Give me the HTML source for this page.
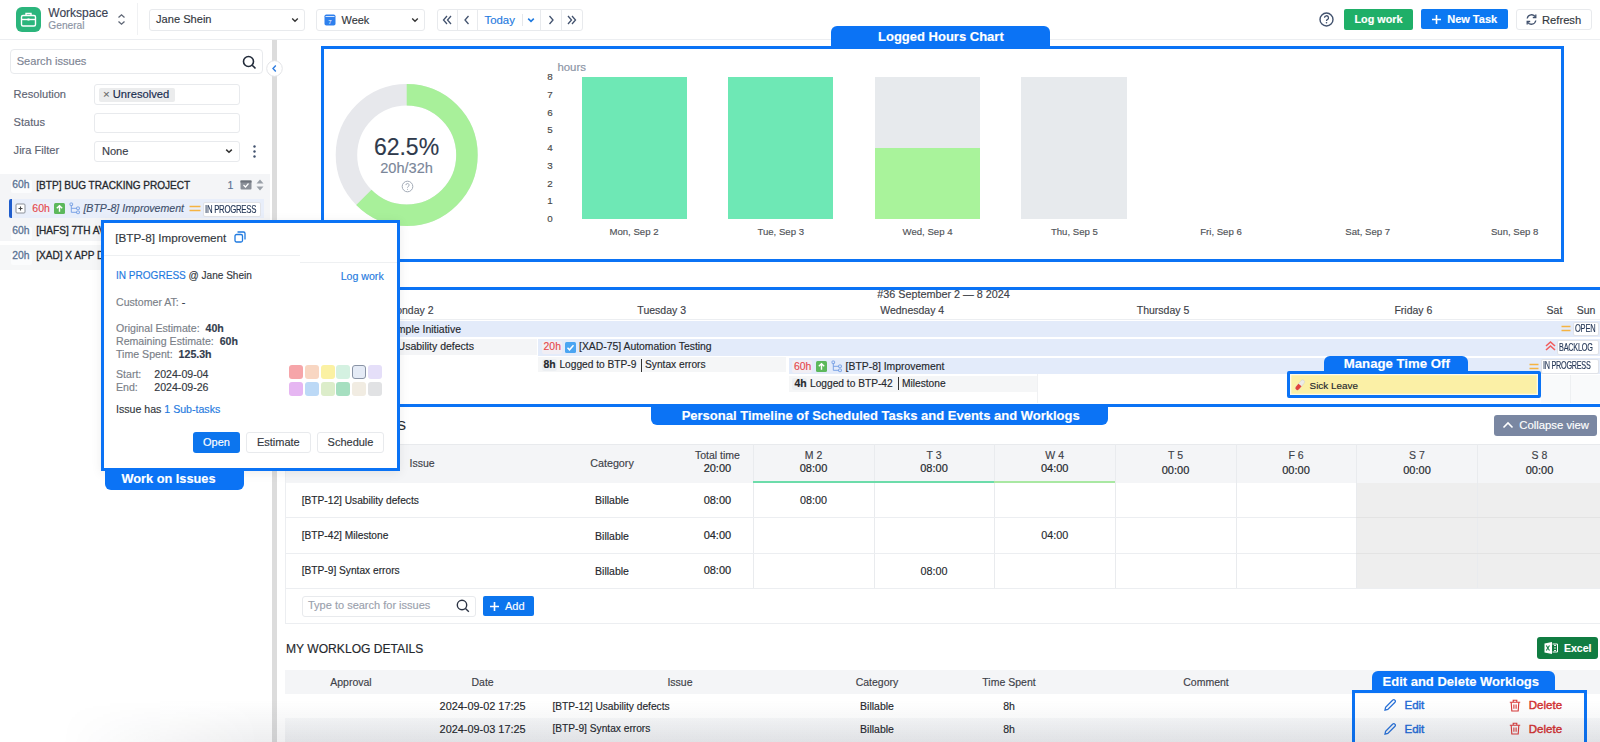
<!DOCTYPE html>
<html><head><meta charset="utf-8"><style>
html,body{margin:0;padding:0;width:1600px;height:742px;overflow:hidden;background:#fff;font-family:"Liberation Sans",sans-serif;}
.a{position:absolute;box-sizing:border-box;}
.t{white-space:nowrap;line-height:1;-webkit-text-stroke-width:0.15px;}
svg{display:block}
</style></head><body>
<div class="a " style="left:0px;top:39px;width:1600px;height:1px;background:#eceef1"></div>
<div class="a " style="left:137px;top:3px;width:1px;height:32px;background:#f0f1f3"></div>
<div class="a " style="left:16px;top:7px;width:25px;height:25px;background:#2bb57c;border-radius:6px"></div>
<svg class="a" style="left:16px;top:7px" width="25" height="25" viewBox="0 0 25 25"><g fill="none" stroke="#fff" stroke-width="1.4"><rect x="5.5" y="8.5" width="14" height="10.5" rx="1.5"/><path d="M10 8.5V6.5h5v2"/><path d="M5.5 12.5h14"/></g><rect x="11.5" y="11.5" width="2" height="2" fill="#fff"/></svg>
<div class="a t" style="left:48.30px;top:6.54px;font-size:12px;color:#3b4354;font-weight:400;">Workspace</div>
<div class="a t" style="left:48.30px;top:21.17px;font-size:10.2px;color:#8b93a3;font-weight:400;">General</div>
<svg class="a" style="left:116px;top:13px" width="11" height="13" viewBox="0 0 11 13"><path d="M2.5 4.5L5.5 1.8 8.5 4.5M2.5 8.5L5.5 11.2 8.5 8.5" fill="none" stroke="#5e6675" stroke-width="1.3"/></svg>
<div class="a " style="left:149px;top:9px;width:156px;height:21.5px;border:1px solid #e8eaed;border-radius:3px;background:#fff"></div>
<div class="a t" style="left:156.00px;top:14.10px;font-size:11.1px;color:#333840;font-weight:400;">Jane Shein</div>
<svg class="a" style="left:291px;top:16px" width="8" height="8" viewBox="0 0 8 8"><path d="M1.2 2.6L4 5.3 6.8 2.6" fill="none" stroke="#333" stroke-width="1.4"/></svg>
<div class="a " style="left:316px;top:9px;width:109px;height:21.5px;border:1px solid #e8eaed;border-radius:3px;background:#fff"></div>
<svg class="a" style="left:324px;top:14px" width="12" height="12" viewBox="0 0 12 12"><rect x="0.5" y="0.5" width="11" height="11" rx="1.8" fill="#2f80ed"/><rect x="1.5" y="2" width="9" height="0.9" fill="#e8f0ff"/><text x="6" y="10" font-size="6" fill="#fff" text-anchor="middle" font-family="Liberation Sans">7</text></svg>
<div class="a t" style="left:341.60px;top:14.77px;font-size:10.9px;color:#333840;font-weight:400;">Week</div>
<svg class="a" style="left:411px;top:16px" width="8" height="8" viewBox="0 0 8 8"><path d="M1.2 2.6L4 5.3 6.8 2.6" fill="none" stroke="#333" stroke-width="1.4"/></svg>
<div class="a " style="left:436.5px;top:9px;width:146px;height:21.5px;border:1px solid #e8eaed;border-radius:3px;background:#fff"></div>
<div class="a " style="left:457px;top:9.5px;width:1px;height:20.5px;background:#e8eaed"></div>
<div class="a " style="left:477px;top:9.5px;width:1px;height:20.5px;background:#e8eaed"></div>
<div class="a " style="left:540px;top:9.5px;width:1px;height:20.5px;background:#e8eaed"></div>
<div class="a " style="left:561px;top:9.5px;width:1px;height:20.5px;background:#e8eaed"></div>
<div class="a " style="left:522px;top:14px;width:1px;height:12px;background:#e6e8eb"></div>
<svg class="a" style="left:441px;top:14px" width="12" height="12" viewBox="0 0 12 12"><path d="M6 2L2.5 6 6 10M10 2L6.5 6 10 10" fill="none" stroke="#42526e" stroke-width="1.3"/></svg>
<svg class="a" style="left:461px;top:14px" width="12" height="12" viewBox="0 0 12 12"><path d="M7.5 2L4 6 7.5 10" fill="none" stroke="#42526e" stroke-width="1.3"/></svg>
<div class="a t" style="left:484.50px;top:15.15px;font-size:11.4px;color:#1f7ae0;font-weight:400;">Today</div>
<svg class="a" style="left:527px;top:16px" width="8" height="8" viewBox="0 0 8 8"><path d="M1.2 2.6L4 5.3 6.8 2.6" fill="none" stroke="#1f7ae0" stroke-width="1.6"/></svg>
<svg class="a" style="left:545px;top:14px" width="12" height="12" viewBox="0 0 12 12"><path d="M4.5 2L8 6 4.5 10" fill="none" stroke="#42526e" stroke-width="1.3"/></svg>
<svg class="a" style="left:566px;top:14px" width="12" height="12" viewBox="0 0 12 12"><path d="M2 2L5.5 6 2 10M6 2L9.5 6 6 10" fill="none" stroke="#42526e" stroke-width="1.3"/></svg>
<svg class="a" style="left:1319px;top:12px" width="15" height="15" viewBox="0 0 15 15"><circle cx="7.5" cy="7.5" r="6.5" fill="none" stroke="#42526e" stroke-width="1.4"/><path d="M5.5 5.8a2 2 0 1 1 2.8 1.8c-.6.3-.8.6-.8 1.3" fill="none" stroke="#42526e" stroke-width="1.3"/><circle cx="7.5" cy="10.8" r=".8" fill="#42526e"/></svg>
<div class="a " style="left:1344px;top:9px;width:69px;height:21px;background:#1faf68;border-radius:2px"></div>
<div class="a t" style="left:1078.50px;width:600px;text-align:center;top:14.36px;font-size:10.8px;color:#fff;font-weight:700;">Log work</div>
<div class="a " style="left:1421px;top:9px;width:87px;height:20px;background:#0c78f2;border-radius:2px"></div>
<svg class="a" style="left:1431px;top:14px" width="11" height="11" viewBox="0 0 11 11"><path d="M5.5 1v9M1 5.5h9" stroke="#fff" stroke-width="1.6"/></svg>
<div class="a t" style="left:1447.20px;top:14.19px;font-size:11px;color:#fff;font-weight:700;">New Task</div>
<div class="a " style="left:1516px;top:9px;width:76px;height:21px;border:1px solid #e8eaed;border-radius:3px;background:#fff"></div>
<svg class="a" style="left:1525px;top:13px" width="13" height="13" viewBox="0 0 13 13"><path d="M2.2 5.5A4.5 4.5 0 0 1 10.5 4M10.8 7.5A4.5 4.5 0 0 1 2.5 9" fill="none" stroke="#42526e" stroke-width="1.3"/><path d="M10.8 1.5v3h-3M2.2 11.5v-3h3" fill="none" stroke="#42526e" stroke-width="1.3"/></svg>
<div class="a t" style="left:1542.00px;top:14.52px;font-size:11.2px;color:#333840;font-weight:400;">Refresh</div>
<div class="a " style="left:271.5px;top:40px;width:5.5px;height:702px;background:#dcdcdc"></div>
<div class="a " style="left:9.5px;top:49px;width:253.5px;height:25px;border:1px solid #e8eaed;border-radius:4px;background:#fff"></div>
<div class="a t" style="left:16.70px;top:55.80px;font-size:11.1px;color:#7d8594;font-weight:400;">Search issues</div>
<svg class="a" style="left:242px;top:55px" width="15" height="15" viewBox="0 0 15 15"><circle cx="6.5" cy="6.5" r="5" fill="none" stroke="#222b3a" stroke-width="1.6"/><path d="M10.2 10.2L13.5 13.5" stroke="#222b3a" stroke-width="1.6"/></svg>
<svg class="a" style="left:266px;top:60px" width="17" height="17" viewBox="0 0 17 17"><circle cx="8.5" cy="8.5" r="7.8" fill="#fff" stroke="#e3e4e7" stroke-width="1"/><path d="M9.8 5.5L7 8.5 9.8 11.5" fill="none" stroke="#2f7de1" stroke-width="1.4"/></svg>
<div class="a t" style="left:13.60px;top:88.80px;font-size:11.1px;color:#5e6473;font-weight:400;">Resolution</div>
<div class="a " style="left:94.3px;top:84px;width:145.5px;height:20.5px;border:1px solid #e8eaed;border-radius:3px;background:#fff"></div>
<div class="a " style="left:99.3px;top:87.5px;width:76.2px;height:14px;background:#ebeced;border-radius:2px"></div>
<div class="a t" style="left:103.00px;top:89.27px;font-size:11.5px;color:#666;font-weight:400;">×</div>
<div class="a t" style="left:112.70px;top:89.22px;font-size:11.2px;color:#172b4d;font-weight:400;">Unresolved</div>
<div class="a t" style="left:13.60px;top:116.80px;font-size:11.1px;color:#5e6473;font-weight:400;">Status</div>
<div class="a " style="left:94.3px;top:112.5px;width:145.5px;height:20px;border:1px solid #e8eaed;border-radius:3px;background:#fff"></div>
<div class="a t" style="left:13.60px;top:145.10px;font-size:11.1px;color:#5e6473;font-weight:400;">Jira Filter</div>
<div class="a " style="left:94.3px;top:140.6px;width:145.5px;height:21.8px;border:1px solid #e8eaed;border-radius:3px;background:#fff"></div>
<div class="a t" style="left:101.90px;top:146.40px;font-size:11.1px;color:#3a404a;font-weight:400;">None</div>
<svg class="a" style="left:225px;top:147px" width="8" height="8" viewBox="0 0 8 8"><path d="M1.2 2.6L4 5.3 6.8 2.6" fill="none" stroke="#333" stroke-width="1.5"/></svg>
<svg class="a" style="left:252px;top:144px" width="5" height="15" viewBox="0 0 5 15"><circle cx="2.5" cy="2.5" r="1.2" fill="#42526e"/><circle cx="2.5" cy="7.5" r="1.2" fill="#42526e"/><circle cx="2.5" cy="12.5" r="1.2" fill="#42526e"/></svg>
<div class="a " style="left:0px;top:174px;width:270px;height:45.5px;background:#f4f5f7"></div>
<div class="a " style="left:11px;top:180px;width:21px;height:13px;background:#fbfcfd;border-radius:2px"></div>
<div class="a t" style="left:12.30px;top:180.48px;font-size:10.3px;color:#5a7394;font-weight:400;-webkit-text-stroke:0.3px #5a7394">60h</div>
<div class="a t" style="left:36.30px;top:180.69px;font-size:10.05px;color:#25282d;font-weight:400;-webkit-text-stroke:0.3px #25282d">[BTP] BUG TRACKING PROJECT</div>
<div class="a t" style="left:227.50px;top:180.31px;font-size:10.5px;color:#5a7394;font-weight:400;">1</div>
<svg class="a" style="left:240px;top:179px" width="12" height="11" viewBox="0 0 12 11"><rect x="0.5" y="1.5" width="11" height="9" rx="1" fill="#8a8f98"/><rect x="0.5" y="1.5" width="11" height="2" fill="#6d727b"/><path d="M3.5 6l2 2 3-3.5" fill="none" stroke="#fff" stroke-width="1.2"/></svg>
<svg class="a" style="left:256px;top:179px" width="8" height="12" viewBox="0 0 8 12"><path d="M4 0.5L7.5 4.5h-7zM4 11.5L0.5 7.5h7z" fill="#9aa0a8"/></svg>
<div class="a " style="left:9px;top:199px;width:255px;height:19px;background:#e8eefa"></div>
<div class="a " style="left:9px;top:199px;width:3px;height:19px;background:#1f5dcc;border-radius:2px 0 0 2px"></div>
<svg class="a" style="left:15px;top:203px" width="11" height="11" viewBox="0 0 11 11"><rect x="1" y="1" width="9" height="9" rx="1" fill="#fff" stroke="#8a8f98" stroke-width="1"/><path d="M5.5 3.5v4M3.5 5.5h4" stroke="#444" stroke-width="1.1"/></svg>
<div class="a " style="left:31px;top:202px;width:19px;height:13px;background:#edf0f8;border-radius:2px"></div>
<div class="a t" style="left:32.30px;top:203.11px;font-size:10.5px;color:#e5484d;font-weight:400;">60h</div>
<svg class="a" style="left:54px;top:203px" width="11" height="11" viewBox="0 0 11 11"><rect width="11" height="11" rx="1.5" fill="#5cb85c"/><path d="M5.5 8.8V2.8M2.8 5.3l2.7-2.6 2.7 2.6" fill="none" stroke="#fff" stroke-width="1.4"/></svg>
<svg class="a" style="left:69px;top:202px" width="12" height="13" viewBox="0 0 12 13"><g fill="none" stroke="#6f9be3" stroke-width="0.9"><rect x="1" y="1" width="2.6" height="2.6" rx=".6"/><rect x="7.6" y="5" width="2.8" height="2.6" rx=".6"/><rect x="7.6" y="9" width="2.8" height="2.6" rx=".6"/><path d="M2.3 3.6v6.7h5.3M2.3 6.3h5.3"/></g></svg>
<div class="a t" style="left:83.40px;top:203.03px;font-size:10.6px;color:#42526e;font-weight:400;font-style:italic">[BTP-8] Improvement</div>
<svg class="a" style="left:189px;top:204px" width="12" height="9" viewBox="0 0 12 9"><path d="M0.5 2.5h11M0.5 6.5h11" stroke="#f5b342" stroke-width="1.6"/></svg>
<div class="a " style="left:203px;top:202px;width:58px;height:14.5px;background:#fff;border:1px solid #e1e3e8;border-radius:2px"></div>
<div class="a t" style="left:204.50px;top:203.99px;font-size:11px;color:#253858;font-weight:400;transform:scaleX(0.71);transform-origin:0 0;letter-spacing:-0.4px">IN PROGRESS</div>
<div class="a " style="left:0px;top:219.5px;width:270px;height:21.5px;background:#f4f5f7"></div>
<div class="a " style="left:11px;top:227px;width:21px;height:13px;background:#fbfcfd;border-radius:2px"></div>
<div class="a t" style="left:12.30px;top:225.78px;font-size:10.3px;color:#5a7394;font-weight:400;-webkit-text-stroke:0.3px #5a7394">60h</div>
<div class="a t" style="left:36.30px;top:225.99px;font-size:10.05px;color:#25282d;font-weight:400;-webkit-text-stroke:0.3px #25282d">[HAFS] 7TH AVENUE PROJECT</div>
<div class="a " style="left:0px;top:245px;width:270px;height:25px;background:#f6f7f8"></div>
<div class="a " style="left:11px;top:252px;width:21px;height:13px;background:#fbfcfd;border-radius:2px"></div>
<div class="a t" style="left:12.30px;top:251.28px;font-size:10.3px;color:#5a7394;font-weight:400;-webkit-text-stroke:0.3px #5a7394">20h</div>
<div class="a t" style="left:36.30px;top:251.49px;font-size:10.05px;color:#25282d;font-weight:400;-webkit-text-stroke:0.3px #25282d">[XAD] X APP DEVELOPMENT</div>
<div class="a " style="left:321px;top:46px;width:1243px;height:216px;border:3px solid #0b73f5"></div>
<svg class="a" style="left:326px;top:74px" width="162" height="162" viewBox="0 0 162 162"><circle cx="80.7" cy="81" r="60.25" fill="none" stroke="#e7e8ec" stroke-width="21.5"/><circle cx="80.7" cy="81" r="60.25" fill="none" stroke="#a8f09a" stroke-width="21.5" stroke-dasharray="236.58 400" transform="rotate(-90 80.7 81)"/></svg>
<div class="a t" style="left:106.50px;width:600px;text-align:center;top:136.13px;font-size:23px;color:#2f3a4c;font-weight:400;">62.5%</div>
<div class="a t" style="left:106.60px;width:600px;text-align:center;top:160.94px;font-size:14.6px;color:#7a8699;font-weight:400;">20h/32h</div>
<svg class="a" style="left:401px;top:180px" width="13" height="13" viewBox="0 0 13 13"><circle cx="6.5" cy="6.5" r="5.3" fill="none" stroke="#a3abb7" stroke-width="1"/><path d="M4.9 5.1a1.6 1.6 0 1 1 2.2 1.5c-.5.2-.6.5-.6 1" fill="none" stroke="#a3abb7" stroke-width="1"/><circle cx="6.5" cy="9.3" r=".55" fill="#a3abb7"/></svg>
<div class="a t" style="left:557.40px;top:61.65px;font-size:11.4px;color:#8993a4;font-weight:400;">hours</div>
<div class="a t" style="left:250.00px;width:600px;text-align:center;top:214.00px;font-size:9.8px;color:#484848;font-weight:400;">0</div>
<div class="a t" style="left:250.00px;width:600px;text-align:center;top:196.25px;font-size:9.8px;color:#484848;font-weight:400;">1</div>
<div class="a t" style="left:250.00px;width:600px;text-align:center;top:178.50px;font-size:9.8px;color:#484848;font-weight:400;">2</div>
<div class="a t" style="left:250.00px;width:600px;text-align:center;top:160.75px;font-size:9.8px;color:#484848;font-weight:400;">3</div>
<div class="a t" style="left:250.00px;width:600px;text-align:center;top:143.00px;font-size:9.8px;color:#484848;font-weight:400;">4</div>
<div class="a t" style="left:250.00px;width:600px;text-align:center;top:125.25px;font-size:9.8px;color:#484848;font-weight:400;">5</div>
<div class="a t" style="left:250.00px;width:600px;text-align:center;top:107.50px;font-size:9.8px;color:#484848;font-weight:400;">6</div>
<div class="a t" style="left:250.00px;width:600px;text-align:center;top:89.75px;font-size:9.8px;color:#484848;font-weight:400;">7</div>
<div class="a t" style="left:250.00px;width:600px;text-align:center;top:72.00px;font-size:9.8px;color:#484848;font-weight:400;">8</div>
<div class="a " style="left:581.6px;top:76.7px;width:105px;height:142.3px;background:#6ee8b5"></div>
<div class="a " style="left:728px;top:76.7px;width:105px;height:142.3px;background:#6ee8b5"></div>
<div class="a " style="left:875px;top:77px;width:105px;height:71px;background:#e7eaed"></div>
<div class="a " style="left:875px;top:148px;width:105px;height:71px;background:#a9f39b"></div>
<div class="a " style="left:1021.2px;top:77px;width:105.8px;height:142px;background:#e7eaed"></div>
<div class="a t" style="left:334.00px;width:600px;text-align:center;top:227.27px;font-size:9.6px;color:#505358;font-weight:400;">Mon, Sep 2</div>
<div class="a t" style="left:480.70px;width:600px;text-align:center;top:227.27px;font-size:9.6px;color:#505358;font-weight:400;">Tue, Sep 3</div>
<div class="a t" style="left:627.50px;width:600px;text-align:center;top:227.27px;font-size:9.6px;color:#505358;font-weight:400;">Wed, Sep 4</div>
<div class="a t" style="left:774.40px;width:600px;text-align:center;top:227.27px;font-size:9.6px;color:#505358;font-weight:400;">Thu, Sep 5</div>
<div class="a t" style="left:921.00px;width:600px;text-align:center;top:227.27px;font-size:9.6px;color:#505358;font-weight:400;">Fri, Sep 6</div>
<div class="a t" style="left:1067.70px;width:600px;text-align:center;top:227.27px;font-size:9.6px;color:#505358;font-weight:400;">Sat, Sep 7</div>
<div class="a t" style="left:1214.70px;width:600px;text-align:center;top:227.27px;font-size:9.6px;color:#505358;font-weight:400;">Sun, Sep 8</div>
<div class="a " style="left:831px;top:25.5px;width:219px;height:21.7px;background:#0b73f5;border-radius:6px 6px 0 0"></div>
<div class="a t" style="left:640.90px;width:600px;text-align:center;top:29.80px;font-size:13px;color:#fff;font-weight:700;">Logged Hours Chart</div>
<div class="a " style="left:300px;top:287px;width:1400px;height:119.5px;border:3px solid #0b73f5"></div>
<div class="a t" style="left:643.50px;width:600px;text-align:center;top:289.46px;font-size:10.8px;color:#3d4148;font-weight:400;">#36 September 2 — 8 2024</div>
<div class="a t" style="left:110.50px;width:600px;text-align:center;top:305.11px;font-size:10.5px;color:#3d4148;font-weight:400;">Monday 2</div>
<div class="a t" style="left:361.70px;width:600px;text-align:center;top:305.11px;font-size:10.5px;color:#3d4148;font-weight:400;">Tuesday 3</div>
<div class="a t" style="left:612.20px;width:600px;text-align:center;top:305.11px;font-size:10.5px;color:#3d4148;font-weight:400;">Wednesday 4</div>
<div class="a t" style="left:863.00px;width:600px;text-align:center;top:305.11px;font-size:10.5px;color:#3d4148;font-weight:400;">Thursday 5</div>
<div class="a t" style="left:1113.40px;width:600px;text-align:center;top:305.11px;font-size:10.5px;color:#3d4148;font-weight:400;">Friday 6</div>
<div class="a t" style="left:1254.50px;width:600px;text-align:center;top:305.11px;font-size:10.5px;color:#3d4148;font-weight:400;">Sat</div>
<div class="a t" style="left:1286.00px;width:600px;text-align:center;top:305.11px;font-size:10.5px;color:#3d4148;font-weight:400;">Sun</div>
<div class="a " style="left:303px;top:318.5px;width:1297px;height:1px;background:#eceef1"></div>
<div class="a " style="left:303px;top:320.5px;width:1297px;height:16.5px;background:#e3ebfa"></div>
<div class="a t" style="left:-139.00px;width:600px;text-align:right;top:324.11px;font-size:10.5px;color:#25282d;font-weight:400;">Example Initiative</div>
<svg class="a" style="left:1561px;top:324px" width="10" height="9" viewBox="0 0 10 9"><path d="M0.5 2.5h9M0.5 6.5h9" stroke="#f5b342" stroke-width="1.5"/></svg>
<div class="a " style="left:1573px;top:322px;width:25.5px;height:14px;background:#fff;border:1px solid #e1e3e8;border-radius:2px"></div>
<div class="a t" style="left:1574.80px;top:323.49px;font-size:11px;color:#253858;font-weight:400;transform:scaleX(0.68);transform-origin:0 0;letter-spacing:-0.3px">OPEN</div>
<div class="a " style="left:303px;top:339px;width:233.5px;height:16px;background:#f4f5f7"></div>
<div class="a t" style="left:-126.00px;width:600px;text-align:right;top:341.41px;font-size:10.5px;color:#25282d;font-weight:400;">[BTP-12] Usability defects</div>
<div class="a " style="left:538px;top:339px;width:1062px;height:16.5px;background:#e3ebfa"></div>
<div class="a " style="left:542px;top:341px;width:20px;height:13px;background:#f1eef4;border-radius:2px"></div>
<div class="a t" style="left:543.60px;top:342.20px;font-size:10.4px;color:#e5484d;font-weight:400;">20h</div>
<svg class="a" style="left:565px;top:341.5px" width="11" height="11" viewBox="0 0 11 11"><rect width="11" height="11" rx="1.5" fill="#4ba5f2"/><path d="M2.5 5.8l2 2 4-4.5" fill="none" stroke="#fff" stroke-width="1.5"/></svg>
<div class="a t" style="left:579.00px;top:342.20px;font-size:10.4px;color:#25282d;font-weight:400;">[XAD-75] Automation Testing</div>
<svg class="a" style="left:1545px;top:340px" width="11" height="12" viewBox="0 0 11 12"><path d="M1 6L5.5 2 10 6M1 10L5.5 6 10 10" fill="none" stroke="#f05d5d" stroke-width="1.6"/></svg>
<div class="a " style="left:1557px;top:340px;width:41.5px;height:15px;background:#fff;border:1px solid #e1e3e8;border-radius:2px"></div>
<div class="a t" style="left:1558.60px;top:341.99px;font-size:11px;color:#253858;font-weight:400;transform:scaleX(0.66);transform-origin:0 0;letter-spacing:-0.3px">BACKLOG</div>
<div class="a " style="left:538px;top:357px;width:248px;height:15px;background:#f5f6f7"></div>
<div class="a " style="left:542px;top:358.5px;width:15px;height:12px;background:#eceff2;border-radius:2px"></div>
<div class="a t" style="left:543.60px;top:359.80px;font-size:10.4px;color:#25282d;font-weight:700;">8h</div>
<div class="a t" style="left:559.40px;top:359.97px;font-size:10.2px;color:#25282d;font-weight:400;">Logged to BTP-9</div>
<div class="a " style="left:640.5px;top:358.5px;width:1.2px;height:13px;background:#333"></div>
<div class="a t" style="left:645.00px;top:359.97px;font-size:10.2px;color:#25282d;font-weight:400;">Syntax errors</div>
<div class="a " style="left:789px;top:358px;width:811px;height:16px;background:#e3ebfa"></div>
<div class="a " style="left:792px;top:360px;width:20px;height:13px;background:#f1eef4;border-radius:2px"></div>
<div class="a t" style="left:794.00px;top:361.80px;font-size:10.4px;color:#e5484d;font-weight:400;">60h</div>
<svg class="a" style="left:816px;top:361px" width="11" height="11" viewBox="0 0 11 11"><rect width="11" height="11" rx="1.5" fill="#5cb85c"/><path d="M5.5 8.8V2.8M2.8 5.3l2.7-2.6 2.7 2.6" fill="none" stroke="#fff" stroke-width="1.4"/></svg>
<svg class="a" style="left:831px;top:360px" width="12" height="13" viewBox="0 0 12 13"><g fill="none" stroke="#6f9be3" stroke-width="0.9"><rect x="1" y="1" width="2.6" height="2.6" rx=".6"/><rect x="7.6" y="5" width="2.8" height="2.6" rx=".6"/><rect x="7.6" y="9" width="2.8" height="2.6" rx=".6"/><path d="M2.3 3.6v6.7h5.3M2.3 6.3h5.3"/></g></svg>
<div class="a t" style="left:845.60px;top:361.80px;font-size:10.4px;color:#25282d;font-weight:400;">[BTP-8] Improvement</div>
<svg class="a" style="left:1529px;top:362px" width="10" height="9" viewBox="0 0 10 9"><path d="M0.5 2.5h9M0.5 6.5h9" stroke="#f5b342" stroke-width="1.5"/></svg>
<div class="a " style="left:1541px;top:358.5px;width:57.5px;height:15px;background:#fff;border:1px solid #e1e3e8;border-radius:2px"></div>
<div class="a t" style="left:1542.60px;top:360.49px;font-size:11px;color:#253858;font-weight:400;transform:scaleX(0.66);transform-origin:0 0;letter-spacing:-0.4px">IN PROGRESS</div>
<div class="a " style="left:789px;top:376px;width:248px;height:16px;background:#f5f6f7"></div>
<div class="a " style="left:792px;top:377.5px;width:15px;height:12px;background:#eceff2;border-radius:2px"></div>
<div class="a t" style="left:794.40px;top:378.60px;font-size:10.4px;color:#25282d;font-weight:700;">4h</div>
<div class="a t" style="left:810.00px;top:378.77px;font-size:10.2px;color:#25282d;font-weight:400;">Logged to BTP-42</div>
<div class="a " style="left:897.5px;top:377px;width:1.2px;height:13px;background:#333"></div>
<div class="a t" style="left:902.00px;top:378.77px;font-size:10.2px;color:#25282d;font-weight:400;">Milestone</div>
<div class="a " style="left:1037px;top:374px;width:1px;height:29px;background:#f0f1f3"></div>
<div class="a " style="left:1541px;top:374.5px;width:59px;height:28.5px;background:#f9fafb"></div>
<div class="a " style="left:1570px;top:374.5px;width:1px;height:28.5px;background:#eef0f2"></div>
<div class="a " style="left:1287px;top:371px;width:254px;height:27px;border:3px solid #0b73f5;border-radius:2px;background:#fbf0a6;box-shadow:inset 0 0 0 1.3px #fdfbe8"></div>
<svg class="a" style="left:1294px;top:379px" width="12" height="12" viewBox="0 0 12 12"><g transform="rotate(-50 6 6)"><rect x="0" y="4" width="12" height="4" rx="2" fill="#ecebe6" stroke="#cfcfcf" stroke-width=".5"/><path d="M2 4h4v4H2a2 2 0 0 1 0-4z" fill="#e2423c"/></g></svg>
<div class="a t" style="left:1309.60px;top:380.62px;font-size:9.9px;color:#25282d;font-weight:400;">Sick Leave</div>
<div class="a " style="left:1324px;top:356px;width:144px;height:15.5px;background:#0b73f5;border-radius:6px 6px 0 0"></div>
<div class="a t" style="left:1096.80px;width:600px;text-align:center;top:356.83px;font-size:13.2px;color:#fff;font-weight:700;">Manage Time Off</div>
<div class="a " style="left:650.5px;top:405.5px;width:457.5px;height:19.5px;background:#0b73f5;border-radius:0 0 6px 6px"></div>
<div class="a t" style="left:580.70px;width:600px;text-align:center;top:409.30px;font-size:13px;color:#fff;font-weight:700;">Personal Timeline of Scheduled Tasks and Events and Worklogs</div>
<div class="a t" style="left:-194.00px;width:600px;text-align:right;top:418.57px;font-size:13.5px;color:#25282d;font-weight:400;">MY ISSUES</div>
<div class="a " style="left:1494px;top:415px;width:103px;height:21px;background:#7a87a2;border-radius:3px"></div>
<svg class="a" style="left:1502px;top:420px" width="12" height="10" viewBox="0 0 12 10"><path d="M1.5 7.5L6 3 10.5 7.5" fill="none" stroke="#fff" stroke-width="1.6"/></svg>
<div class="a t" style="left:1519.30px;top:420.43px;font-size:11.3px;color:#fff;font-weight:400;">Collapse view</div>
<div class="a " style="left:284.5px;top:444px;width:1315.5px;height:39px;background:#f4f5f7;border-top:1px solid #e8eaed"></div>
<div class="a " style="left:284.5px;top:444px;width:1px;height:180px;background:#eceef1"></div>
<div class="a t" style="left:409.50px;top:458.31px;font-size:10.5px;color:#3d4148;font-weight:400;">Issue</div>
<div class="a t" style="left:312.00px;width:600px;text-align:center;top:457.90px;font-size:10.75px;color:#3d4148;font-weight:400;">Category</div>
<div class="a t" style="left:417.40px;width:600px;text-align:center;top:449.71px;font-size:10.5px;color:#3d4148;font-weight:400;">Total time</div>
<div class="a t" style="left:417.40px;width:600px;text-align:center;top:463.29px;font-size:11px;color:#25282d;font-weight:400;-webkit-text-stroke:0.2px #25282d">20:00</div>
<div class="a t" style="left:513.50px;width:600px;text-align:center;top:449.91px;font-size:10.5px;color:#3d4148;font-weight:400;">M 2</div>
<div class="a t" style="left:513.50px;width:600px;text-align:center;top:463.29px;font-size:11px;color:#25282d;font-weight:400;-webkit-text-stroke:0.2px #25282d">08:00</div>
<div class="a t" style="left:634.00px;width:600px;text-align:center;top:449.91px;font-size:10.5px;color:#3d4148;font-weight:400;">T 3</div>
<div class="a t" style="left:634.00px;width:600px;text-align:center;top:463.29px;font-size:11px;color:#25282d;font-weight:400;-webkit-text-stroke:0.2px #25282d">08:00</div>
<div class="a t" style="left:754.70px;width:600px;text-align:center;top:449.91px;font-size:10.5px;color:#3d4148;font-weight:400;">W 4</div>
<div class="a t" style="left:754.70px;width:600px;text-align:center;top:463.29px;font-size:11px;color:#25282d;font-weight:400;-webkit-text-stroke:0.2px #25282d">04:00</div>
<div class="a t" style="left:875.50px;width:600px;text-align:center;top:449.91px;font-size:10.5px;color:#3d4148;font-weight:400;">T 5</div>
<div class="a t" style="left:875.50px;width:600px;text-align:center;top:464.69px;font-size:11px;color:#25282d;font-weight:400;-webkit-text-stroke:0.2px #25282d">00:00</div>
<div class="a t" style="left:996.00px;width:600px;text-align:center;top:449.91px;font-size:10.5px;color:#3d4148;font-weight:400;">F 6</div>
<div class="a t" style="left:996.00px;width:600px;text-align:center;top:464.69px;font-size:11px;color:#25282d;font-weight:400;-webkit-text-stroke:0.2px #25282d">00:00</div>
<div class="a t" style="left:1117.00px;width:600px;text-align:center;top:449.91px;font-size:10.5px;color:#3d4148;font-weight:400;">S 7</div>
<div class="a t" style="left:1117.00px;width:600px;text-align:center;top:464.69px;font-size:11px;color:#25282d;font-weight:400;-webkit-text-stroke:0.2px #25282d">00:00</div>
<div class="a t" style="left:1239.50px;width:600px;text-align:center;top:449.91px;font-size:10.5px;color:#3d4148;font-weight:400;">S 8</div>
<div class="a t" style="left:1239.50px;width:600px;text-align:center;top:464.69px;font-size:11px;color:#25282d;font-weight:400;-webkit-text-stroke:0.2px #25282d">00:00</div>
<div class="a " style="left:1356px;top:483px;width:244px;height:105.5px;background:#eeeeee"></div>
<div class="a " style="left:753px;top:444px;width:1px;height:144.5px;background:#e9ebee"></div>
<div class="a " style="left:874px;top:444px;width:1px;height:144.5px;background:#e9ebee"></div>
<div class="a " style="left:994px;top:444px;width:1px;height:144.5px;background:#e9ebee"></div>
<div class="a " style="left:1115px;top:444px;width:1px;height:144.5px;background:#e9ebee"></div>
<div class="a " style="left:1236px;top:444px;width:1px;height:144.5px;background:#e9ebee"></div>
<div class="a " style="left:1356px;top:444px;width:1px;height:144.5px;background:#e9ebee"></div>
<div class="a " style="left:1477px;top:444px;width:1px;height:144.5px;background:#e9ebee"></div>
<div class="a " style="left:753px;top:480.5px;width:241px;height:2.5px;background:#6cdcaa"></div>
<div class="a " style="left:994px;top:480.5px;width:121px;height:2.5px;background:#a9e8a2"></div>
<div class="a " style="left:284.5px;top:517px;width:1315.5px;height:1px;background:#eceef1"></div>
<div class="a " style="left:284.5px;top:552.5px;width:1315.5px;height:1px;background:#eceef1"></div>
<div class="a " style="left:284.5px;top:588px;width:1315.5px;height:1px;background:#eceef1"></div>
<div class="a " style="left:284.5px;top:623px;width:1315.5px;height:1px;background:#eceef1"></div>
<div class="a " style="left:1356px;top:517px;width:244px;height:1px;background:#e3e3e3"></div>
<div class="a " style="left:1356px;top:552.5px;width:244px;height:1px;background:#e3e3e3"></div>
<div class="a t" style="left:301.70px;top:495.57px;font-size:10.2px;color:#25282d;font-weight:400;">[BTP-12] Usability defects</div>
<div class="a t" style="left:312.00px;width:600px;text-align:center;top:495.31px;font-size:10.5px;color:#25282d;font-weight:400;">Billable</div>
<div class="a t" style="left:417.40px;width:600px;text-align:center;top:494.89px;font-size:11px;color:#25282d;font-weight:400;-webkit-text-stroke:0.2px #25282d">08:00</div>
<div class="a t" style="left:513.50px;width:600px;text-align:center;top:495.06px;font-size:10.8px;color:#25282d;font-weight:400;">08:00</div>
<div class="a t" style="left:301.70px;top:530.87px;font-size:10.2px;color:#25282d;font-weight:400;">[BTP-42] Milestone</div>
<div class="a t" style="left:312.00px;width:600px;text-align:center;top:530.61px;font-size:10.5px;color:#25282d;font-weight:400;">Billable</div>
<div class="a t" style="left:417.40px;width:600px;text-align:center;top:530.19px;font-size:11px;color:#25282d;font-weight:400;-webkit-text-stroke:0.2px #25282d">04:00</div>
<div class="a t" style="left:754.70px;width:600px;text-align:center;top:530.36px;font-size:10.8px;color:#25282d;font-weight:400;">04:00</div>
<div class="a t" style="left:301.70px;top:566.07px;font-size:10.2px;color:#25282d;font-weight:400;">[BTP-9] Syntax errors</div>
<div class="a t" style="left:312.00px;width:600px;text-align:center;top:565.81px;font-size:10.5px;color:#25282d;font-weight:400;">Billable</div>
<div class="a t" style="left:417.40px;width:600px;text-align:center;top:565.39px;font-size:11px;color:#25282d;font-weight:400;-webkit-text-stroke:0.2px #25282d">08:00</div>
<div class="a t" style="left:634.00px;width:600px;text-align:center;top:565.56px;font-size:10.8px;color:#25282d;font-weight:400;">08:00</div>
<div class="a " style="left:301.6px;top:595.6px;width:174px;height:21px;border:1px solid #e8eaed;border-radius:3px;background:#fff"></div>
<div class="a t" style="left:308.00px;top:599.89px;font-size:11px;color:#9aa1ad;font-weight:400;">Type to search for issues</div>
<svg class="a" style="left:456px;top:599px" width="14" height="14" viewBox="0 0 14 14"><circle cx="6" cy="6" r="4.7" fill="none" stroke="#2b3344" stroke-width="1.4"/><path d="M9.5 9.5L12.8 12.8" stroke="#2b3344" stroke-width="1.4"/></svg>
<div class="a " style="left:483px;top:596px;width:50.6px;height:20.4px;background:#0c75ee;border-radius:2px"></div>
<svg class="a" style="left:489px;top:601px" width="11" height="11" viewBox="0 0 11 11"><path d="M5.5 1v9M1 5.5h9" stroke="#fff" stroke-width="1.6"/></svg>
<div class="a t" style="left:505.00px;top:601.19px;font-size:11px;color:#fff;font-weight:400;">Add</div>
<div class="a t" style="left:286.00px;top:643.36px;font-size:12.1px;color:#25282d;font-weight:400;">MY WORKLOG DETAILS</div>
<div class="a " style="left:1537px;top:637.3px;width:61px;height:22px;background:#107c41;border-radius:3px"></div>
<svg class="a" style="left:1544px;top:641px" width="14" height="14" viewBox="0 0 14 14"><path d="M0.5 2.5L8 1v12l-7.5-1.5z" fill="#fff"/><path d="M8.5 3h5v8h-5" fill="none" stroke="#fff" stroke-width="1"/><path d="M10 4.5h2M10 7h2M10 9.5h2" stroke="#fff" stroke-width=".9"/><path d="M2.3 4.5l3.2 5M5.5 4.5l-3.2 5" stroke="#107c41" stroke-width="1.1"/></svg>
<div class="a t" style="left:1564.00px;top:643.11px;font-size:10.5px;color:#fff;font-weight:700;">Excel</div>
<div class="a " style="left:284.5px;top:670px;width:1315.5px;height:24px;background:#f4f5f7"></div>
<div class="a t" style="left:51.00px;width:600px;text-align:center;top:677.11px;font-size:10.5px;color:#3d4148;font-weight:400;">Approval</div>
<div class="a t" style="left:182.60px;width:600px;text-align:center;top:677.11px;font-size:10.5px;color:#3d4148;font-weight:400;">Date</div>
<div class="a t" style="left:380.00px;width:600px;text-align:center;top:677.11px;font-size:10.5px;color:#3d4148;font-weight:400;">Issue</div>
<div class="a t" style="left:577.00px;width:600px;text-align:center;top:677.11px;font-size:10.5px;color:#3d4148;font-weight:400;">Category</div>
<div class="a t" style="left:709.00px;width:600px;text-align:center;top:677.11px;font-size:10.5px;color:#3d4148;font-weight:400;">Time Spent</div>
<div class="a t" style="left:906.00px;width:600px;text-align:center;top:677.11px;font-size:10.5px;color:#3d4148;font-weight:400;">Comment</div>
<div class="a " style="left:284.5px;top:717.5px;width:1315.5px;height:25px;background:linear-gradient(#f8f9fa,#f1f2f4)"></div>
<div class="a t" style="left:439.60px;top:701.07px;font-size:10.9px;color:#25282d;font-weight:400;">2024-09-02 17:25</div>
<div class="a t" style="left:552.40px;top:701.67px;font-size:10.2px;color:#25282d;font-weight:400;">[BTP-12] Usability defects</div>
<div class="a t" style="left:577.00px;width:600px;text-align:center;top:701.41px;font-size:10.5px;color:#25282d;font-weight:400;">Billable</div>
<div class="a t" style="left:709.00px;width:600px;text-align:center;top:701.41px;font-size:10.5px;color:#25282d;font-weight:400;">8h</div>
<div class="a t" style="left:439.60px;top:723.87px;font-size:10.9px;color:#25282d;font-weight:400;">2024-09-03 17:25</div>
<div class="a t" style="left:552.40px;top:724.47px;font-size:10.2px;color:#25282d;font-weight:400;">[BTP-9] Syntax errors</div>
<div class="a t" style="left:577.00px;width:600px;text-align:center;top:724.21px;font-size:10.5px;color:#25282d;font-weight:400;">Billable</div>
<div class="a t" style="left:709.00px;width:600px;text-align:center;top:724.21px;font-size:10.5px;color:#25282d;font-weight:400;">8h</div>
<div class="a " style="left:1352.3px;top:690px;width:234.4px;height:60px;border:3px solid #0b73f5"></div>
<div class="a " style="left:1372px;top:671.3px;width:183px;height:19px;background:#0b73f5;border-radius:6px 6px 0 0"></div>
<div class="a t" style="left:1160.80px;width:600px;text-align:center;top:674.80px;font-size:13px;color:#fff;font-weight:700;">Edit and Delete Worklogs</div>
<svg class="a" style="left:1383px;top:698.1px" width="14" height="14" viewBox="0 0 14 14"><path d="M2 12.2l.6-3L9.8 2a1.3 1.3 0 0 1 1.9 0l.3.3a1.3 1.3 0 0 1 0 1.9L4.8 11.4z" fill="none" stroke="#2a72d8" stroke-width="1.3"/></svg>
<div class="a t" style="left:1404.50px;top:700.37px;font-size:11.5px;color:#1f6bd6;font-weight:400;-webkit-text-stroke:0.4px #1f6bd6">Edit</div>
<svg class="a" style="left:1509px;top:698.6px" width="12" height="13" viewBox="0 0 12 13"><g fill="none" stroke="#d93a3a" stroke-width="1.1"><path d="M0.8 3.2h10.4M4.2 3V1.2h3.6V3"/><path d="M2.2 3.4l.6 8.6h6.4l.6-8.6"/><path d="M4.9 5.6v4.2M7.1 5.6v4.2"/></g></svg>
<div class="a t" style="left:1528.80px;top:700.37px;font-size:11.5px;color:#d22f2f;font-weight:400;-webkit-text-stroke:0.4px #d22f2f">Delete</div>
<svg class="a" style="left:1383px;top:721.5px" width="14" height="14" viewBox="0 0 14 14"><path d="M2 12.2l.6-3L9.8 2a1.3 1.3 0 0 1 1.9 0l.3.3a1.3 1.3 0 0 1 0 1.9L4.8 11.4z" fill="none" stroke="#2a72d8" stroke-width="1.3"/></svg>
<div class="a t" style="left:1404.50px;top:723.77px;font-size:11.5px;color:#1f6bd6;font-weight:400;-webkit-text-stroke:0.4px #1f6bd6">Edit</div>
<svg class="a" style="left:1509px;top:722.0px" width="12" height="13" viewBox="0 0 12 13"><g fill="none" stroke="#d93a3a" stroke-width="1.1"><path d="M0.8 3.2h10.4M4.2 3V1.2h3.6V3"/><path d="M2.2 3.4l.6 8.6h6.4l.6-8.6"/><path d="M4.9 5.6v4.2M7.1 5.6v4.2"/></g></svg>
<div class="a t" style="left:1528.80px;top:723.77px;font-size:11.5px;color:#d22f2f;font-weight:400;-webkit-text-stroke:0.4px #d22f2f">Delete</div>
<div class="a " style="left:101px;top:220px;width:299px;height:251px;border:3px solid #0b73f5;background:#fff;box-shadow:0 2px 10px rgba(0,0,0,0.08)"></div>
<div class="a t" style="left:115.30px;top:231.80px;font-size:11.7px;color:#333840;font-weight:400;">[BTP-8] Improvement</div>
<svg class="a" style="left:234px;top:231px" width="12" height="12" viewBox="0 0 12 12"><g fill="none" stroke="#1f7ae0" stroke-width="1.3"><rect x="1" y="3.5" width="7.5" height="7.5" rx="1.5"/><path d="M3.5 1h6a1.5 1.5 0 0 1 1.5 1.5v6"/></g></svg>
<div class="a " style="left:104px;top:255px;width:196px;height:1px;background:#eef0f2"></div>
<div class="a " style="left:300px;top:262px;width:97px;height:1px;background:#eef0f2"></div>
<div class="a t" style="left:116.00px;top:271.49px;font-size:10.05px;color:#333840;font-weight:400;"><span style='color:#1f7ae0'>IN PROGRESS</span> @ Jane Shein</div>
<div class="a t" style="left:-216.30px;width:600px;text-align:right;top:271.03px;font-size:10.6px;color:#1f7ae0;font-weight:400;">Log work</div>
<div class="a t" style="left:116.00px;top:297.03px;font-size:10.6px;color:#7a8088;font-weight:400;">Customer AT: <span style='color:#333d4e'>-</span></div>
<div class="a t" style="left:116.00px;top:323.23px;font-size:10.6px;color:#7a8088;font-weight:400;">Original Estimate:&nbsp; <b style='color:#333d4e'>40h</b></div>
<div class="a t" style="left:116.00px;top:336.33px;font-size:10.6px;color:#7a8088;font-weight:400;">Remaining Estimate:&nbsp; <b style='color:#333d4e'>60h</b></div>
<div class="a t" style="left:116.00px;top:349.33px;font-size:10.6px;color:#7a8088;font-weight:400;">Time Spent:&nbsp; <b style='color:#333d4e'>125.3h</b></div>
<div class="a t" style="left:116.00px;top:368.53px;font-size:10.6px;color:#7a8088;font-weight:400;">Start:</div>
<div class="a t" style="left:154.30px;top:368.53px;font-size:10.6px;color:#333840;font-weight:500;">2024-09-04</div>
<div class="a t" style="left:116.00px;top:381.63px;font-size:10.6px;color:#7a8088;font-weight:400;">End:</div>
<div class="a t" style="left:154.30px;top:381.63px;font-size:10.6px;color:#333840;font-weight:500;">2024-09-26</div>
<div class="a " style="left:289px;top:365px;width:13.7px;height:13.8px;background:#f6a5a9;border-radius:3px;"></div>
<div class="a " style="left:289px;top:382px;width:13.7px;height:13.5px;background:#e6b6f2;border-radius:3px"></div>
<div class="a " style="left:305px;top:365px;width:13.7px;height:13.8px;background:#f8d6c2;border-radius:3px;"></div>
<div class="a " style="left:305px;top:382px;width:13.7px;height:13.5px;background:#bcd9f6;border-radius:3px"></div>
<div class="a " style="left:321px;top:365px;width:13.7px;height:13.8px;background:#fbf1a3;border-radius:3px;"></div>
<div class="a " style="left:321px;top:382px;width:13.7px;height:13.5px;background:#dcedca;border-radius:3px"></div>
<div class="a " style="left:336.4px;top:365px;width:13.7px;height:13.8px;background:#d4f1e1;border-radius:3px;"></div>
<div class="a " style="left:336.4px;top:382px;width:13.7px;height:13.5px;background:#a6dfc0;border-radius:3px"></div>
<div class="a " style="left:352px;top:365px;width:13.7px;height:13.8px;background:#e5ebf6;border-radius:3px;border:1px solid #8a94a6;"></div>
<div class="a " style="left:352px;top:382px;width:13.7px;height:13.5px;background:#f1ece2;border-radius:3px"></div>
<div class="a " style="left:368px;top:365px;width:13.7px;height:13.8px;background:#e5dff9;border-radius:3px;"></div>
<div class="a " style="left:368px;top:382px;width:13.7px;height:13.5px;background:#e1e2e4;border-radius:3px"></div>
<div class="a t" style="left:116.00px;top:404.33px;font-size:10.6px;color:#333840;font-weight:400;">Issue has <span style='color:#1f7ae0'>1 Sub-tasks</span></div>
<div class="a " style="left:193px;top:432px;width:47px;height:20.5px;background:#0c75ee;border-radius:3px"></div>
<div class="a t" style="left:-83.50px;width:600px;text-align:center;top:436.99px;font-size:11px;color:#fff;font-weight:400;">Open</div>
<div class="a " style="left:246px;top:432px;width:64.6px;height:20.5px;border:1px solid #e8eaed;border-radius:3px;background:#fff"></div>
<div class="a t" style="left:-21.70px;width:600px;text-align:center;top:436.99px;font-size:11px;color:#333840;font-weight:400;">Estimate</div>
<div class="a " style="left:317px;top:432px;width:67px;height:20.5px;border:1px solid #e8eaed;border-radius:3px;background:#fff"></div>
<div class="a t" style="left:50.50px;width:600px;text-align:center;top:436.99px;font-size:11px;color:#333840;font-weight:400;">Schedule</div>
<div class="a " style="left:105px;top:470.8px;width:138.7px;height:19px;background:#0b73f5;border-radius:0 0 6px 6px"></div>
<div class="a t" style="left:-131.50px;width:600px;text-align:center;top:472.81px;font-size:12.75px;color:#fff;font-weight:700;">Work on Issues</div>
<div class="a " style="left:0px;top:700px;width:1600px;height:42px;background:linear-gradient(rgba(20,30,50,0),rgba(20,30,50,0.075));-webkit-mask-image:linear-gradient(to right,transparent 60px,#000 260px)"></div>
</body></html>
